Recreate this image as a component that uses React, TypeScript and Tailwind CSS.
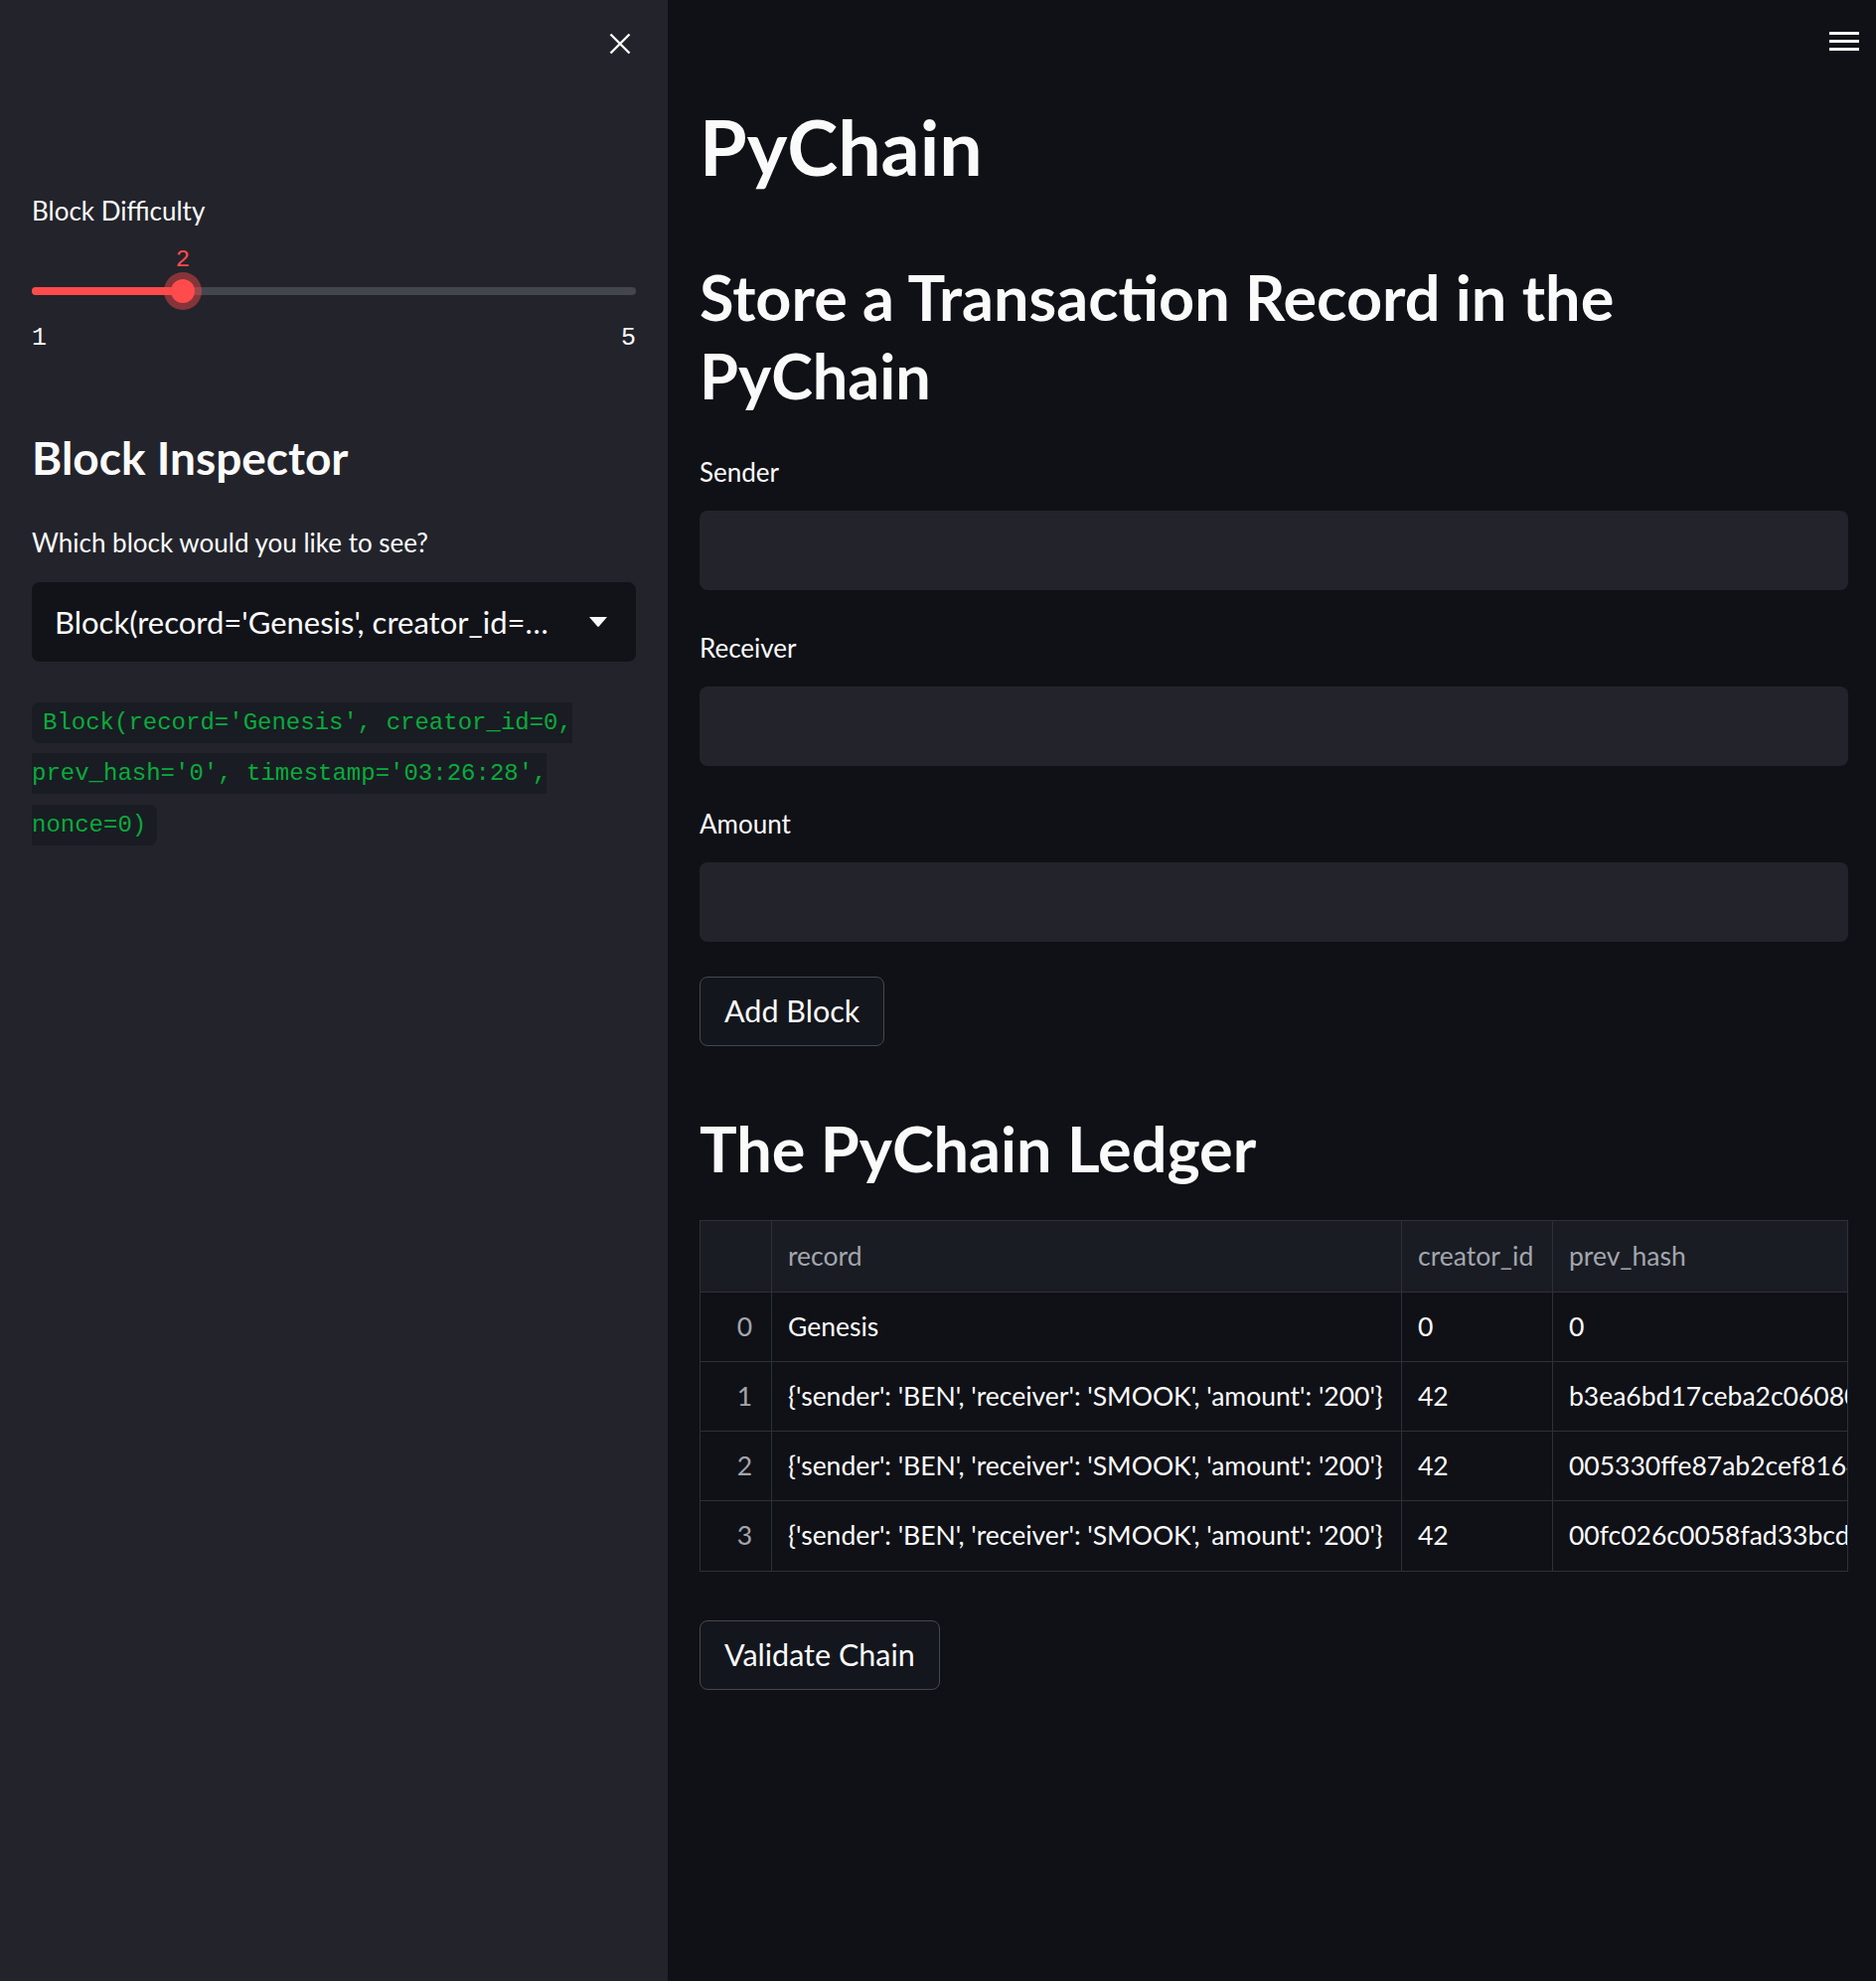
import React from 'react'

const rows = [
  { idx: 0, record: 'Genesis', creator: '0', hash: '0' },
  {
    idx: 1,
    record: "{'sender': 'BEN', 'receiver': 'SMOOK', 'amount': '200'}",
    creator: '42',
    hash: 'b3ea6bd17ceba2c06080e9f1b4c2d7a85e3f60c19d2b7a4e8f1c03d5b6a9e2f7',
  },
  {
    idx: 2,
    record: "{'sender': 'BEN', 'receiver': 'SMOOK', 'amount': '200'}",
    creator: '42',
    hash: '005330ffe87ab2cef8164b2d9e07c3a1f5b84d6e2c9a0f7b3e1d5c8a4f6b2e90',
  },
  {
    idx: 3,
    record: "{'sender': 'BEN', 'receiver': 'SMOOK', 'amount': '200'}",
    creator: '42',
    hash: '00fc026c0058fad33bcd8e41a7f2b6c9d03e5a8f1b4c7d2e6a9f0b3c5d8e1a47',
  },
]

function Label({ children, className = '' }: { children: React.ReactNode; className?: string }) {
  return <div className={`text-[26px] leading-[34px] text-[#fafafa] ${className}`}>{children}</div>
}

function Sidebar() {
  return (
    <aside className="w-[672px] shrink-0 bg-[#22232b] px-8 text-[#fafafa]">
      <div className="flex justify-end pt-[33px] pr-[5px]">
        <svg width="22" height="22" viewBox="0 0 22 22">
          <path d="M1.5 1.5L20.5 20.5M20.5 1.5L1.5 20.5" stroke="#fafafa" strokeWidth="2.4" />
        </svg>
      </div>

      <Label className="mt-[140px]">Block Difficulty</Label>

      <div className="relative mt-[60px] h-[8px] rounded-full bg-[#44464e]">
        <div className="h-full w-[152px] rounded-l-full bg-[#ff4b4b]" />
        <div className="absolute left-[140px] top-[-8px] h-6 w-6 rounded-full bg-[#ff4b4b] shadow-[0_0_0_7px_rgba(255,75,75,0.45)]" />
        <div className="absolute left-[152px] top-[-39px] -translate-x-1/2 font-['Liberation_Mono',monospace] text-[24px] leading-[24px] text-[#ff4b4b]">
          2
        </div>
      </div>
      <div className="mt-[31px] flex justify-between font-['Liberation_Mono',monospace] text-[25px] leading-[25px]">
        <span>1</span>
        <span>5</span>
      </div>

      <h2 className="mt-[80px] text-[46px] font-bold leading-[55px]">Block Inspector</h2>

      <Label className="mt-[41px]">Which block would you like to see?</Label>

      <div className="mt-[23px] flex h-[80px] items-center justify-between rounded-lg bg-[#121319] pl-[23px] pr-[29px]">
        <span className="text-[31px] leading-[36px]">Block(record='Genesis', creator_id=…</span>
        <svg width="18" height="10" viewBox="0 0 18 10">
          <path d="M0 0H18L9.8 9.6Q9 10.3 8.2 9.6Z" fill="#fafafa" />
        </svg>
      </div>

      <div className="mt-[36px] font-['Liberation_Mono',monospace] text-[24px] leading-[51.4px]">
        <code className="rounded-lg bg-[#1a1c23] px-[11px] py-[7px] text-[#09ab3b]">
          Block(record='Genesis', creator_id=0, prev_hash='0', timestamp='03:26:28', nonce=0)
        </code>
      </div>
    </aside>
  )
}

function Ledger() {
  const cell = 'flex items-center border-r border-b border-[#2e3037] px-4 overflow-hidden whitespace-nowrap'
  return (
    <div className="mt-[36px] overflow-hidden border border-[#2e3037] text-[26.5px]">
      <div className="grid w-[1800px] grid-cols-[72px_634px_152px_942px]">
        <div className={`${cell} h-[72px] bg-[#1a1c23]`} />
        <div className={`${cell} h-[72px] bg-[#1a1c23] text-[#a3a6ae]`}>record</div>
        <div className={`${cell} h-[72px] bg-[#1a1c23] text-[#a3a6ae]`}>creator_id</div>
        <div className={`${cell} h-[72px] bg-[#1a1c23] text-[#a3a6ae]`}>prev_hash</div>
        {rows.map((r) => (
          <React.Fragment key={r.idx}>
            <div className={`${cell} h-[70px] justify-end pr-[19px] text-[#a3a6ae] ${r.idx === 3 ? 'border-b-0' : ''}`}>{r.idx}</div>
            <div className={`${cell} h-[70px] text-[#fafafa] ${r.idx === 3 ? 'border-b-0' : ''}`}>{r.record}</div>
            <div className={`${cell} h-[70px] text-[#fafafa] ${r.idx === 3 ? 'border-b-0' : ''}`}>{r.creator}</div>
            <div className={`${cell} h-[70px] text-[#fafafa] ${r.idx === 3 ? 'border-b-0' : ''}`}>{r.hash}</div>
          </React.Fragment>
        ))}
      </div>
    </div>
  )
}

function Button({ children, className = '' }: { children: React.ReactNode; className?: string }) {
  return (
    <button className={`flex h-[70px] items-center rounded-lg border border-[#45474e] bg-[#13161d] px-[24px] text-[30.5px] text-[#fafafa] ${className}`}>
      {children}
    </button>
  )
}

export default function App() {
  return (
    <div className="flex min-h-screen bg-[#101117] font-['Lato',sans-serif] text-[#fafafa]">
      <Sidebar />
      <main className="flex min-w-0 flex-1 flex-col">
        <div className="flex justify-end pr-[17px] pt-[32px]">
          <div className="flex flex-col gap-[5px]">
            <div className="h-[3px] w-[30px] bg-[#fafafa]" />
            <div className="h-[3px] w-[30px] bg-[#fafafa]" />
            <div className="h-[3px] w-[30px] bg-[#fafafa]" />
          </div>
        </div>

        <div className="flex flex-col pl-8 pr-[28px]">
          <h1 className="mt-[50px] text-[77px] font-bold leading-[92px]">PyChain</h1>

          <h2 className="mt-[66px] text-[63px] font-bold leading-[79px]">
            Store a Transaction Record in the
            <br />
            PyChain
          </h2>

          <Label className="mt-[41px]">Sender</Label>
          <div className="mt-[22px] h-[80px] rounded-lg bg-[#22232b]" />

          <Label className="mt-[41px]">Receiver</Label>
          <div className="mt-[22px] h-[80px] rounded-lg bg-[#22232b]" />

          <Label className="mt-[41px]">Amount</Label>
          <div className="mt-[22px] h-[80px] rounded-lg bg-[#22232b]" />

          <div className="mt-[35px] flex">
            <Button>Add Block</Button>
          </div>

          <h2 className="mt-[67px] text-[63px] font-bold leading-[72px]">The PyChain Ledger</h2>

          <Ledger />

          <div className="mt-[49px] flex">
            <Button>Validate Chain</Button>
          </div>
        </div>
      </main>
    </div>
  )
}
